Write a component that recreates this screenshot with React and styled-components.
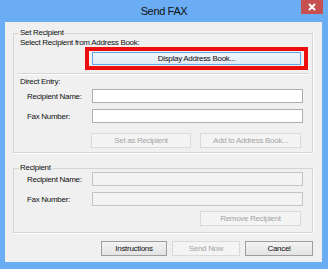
import React from 'react';
import styled, { createGlobalStyle } from 'styled-components';

const Global = createGlobalStyle`
  html, body { margin: 0; padding: 0; }
  body { font-family: "Liberation Sans", Arial, sans-serif; }
  * { box-sizing: border-box; }
`;

const Window = styled.div`
  width: 328px;
  height: 269px;
  background: #6badf4;
  display: flex;
  flex-direction: column;
  padding: 0 6px 7px 5px;
`;

const TitleBar = styled.div`
  position: relative;
  height: 22px;
  margin: 0 -6px 0 -5px;
  display: flex;
  align-items: center;
  justify-content: center;
  font-size: 11px;
  letter-spacing: -0.35px;
  color: #111;
`;

const CloseButton = styled.div`
  position: absolute;
  top: 0;
  right: 5px;
  width: 22px;
  height: 14px;
  background: #c75050;
  display: flex;
  align-items: center;
  justify-content: center;
`;

const Client = styled.div`
  flex: 1;
  background: #f0f0f0;
  padding: 11px 9px 0 8px;
  display: flex;
  flex-direction: column;
  font-size: 8px;
  letter-spacing: -0.3px;
  color: #111;
`;

const Group = styled.div`
  position: relative;
  border: 1px solid #d5d5d5;
  box-shadow: 1px 1px 0 #fdfdfd;
  padding: ${(p) => p.$pad};
  margin-top: ${(p) => p.$mt || 0}px;
  display: flex;
  flex-direction: column;
`;

const Legend = styled.span`
  position: absolute;
  top: -6px;
  left: 5px;
  padding: 0 1px;
  background: #f0f0f0;
  line-height: 10px;
`;

const Caption = styled.div`
  line-height: ${(p) => p.$lh}px;
  height: ${(p) => p.$lh}px;
  margin-top: ${(p) => p.$mt || 0}px;
`;

const Highlight = styled.div`
  margin-left: 65px;
  border: 4px solid #ee0d0d;
  padding: 1px 3px;
  display: flex;
`;

const Separator = styled.div`
  margin: 3px -1px 0 -3px;
  height: 2px;
  border-top: 1px solid #d5d5d5;
  border-bottom: 1px solid #fdfdfd;
`;

const FieldRow = styled.div`
  display: flex;
  align-items: center;
  padding-left: 7px;
  margin-top: ${(p) => p.$mt}px;
`;

const FieldLabel = styled.span`
  width: 65px;
`;

const TextBox = styled.input`
  width: 211px;
  height: 14px;
  margin: 0;
  padding: 0 2px;
  border: 1px solid ${(p) => (p.disabled ? '#c4c4c4' : '#abadb3')};
  background: ${(p) => (p.disabled ? '#f3f3f3' : '#ffffff')};
  outline: none;
  font: inherit;
`;

const ButtonRow = styled.div`
  display: flex;
  justify-content: flex-end;
  gap: ${(p) => p.$gap}px;
  margin-top: ${(p) => p.$mt}px;
  padding-right: ${(p) => p.$pr || 0}px;
`;

const Button = styled.button`
  width: ${(p) => (p.$width ? `${p.$width}px` : 'auto')};
  flex: ${(p) => (p.$width ? 'none' : '1')};
  height: ${(p) => p.$h || 15}px;
  margin: 0;
  padding: 0;
  font-family: "Liberation Sans", Arial, sans-serif;
  font-size: 8px;
  letter-spacing: -0.3px;
  line-height: 1;
  color: ${(p) => (p.disabled ? '#a4a4a4' : '#111')};
  border: 1px solid
    ${(p) =>
      p.disabled ? '#dadada' : p.$accent ? '#5fa4e8' : '#9e9e9e'};
  background: ${(p) =>
    p.disabled
      ? '#f4f4f4'
      : p.$accent
      ? 'linear-gradient(#eef4fb, #e2ebf4)'
      : 'linear-gradient(#f3f3f3, #e3e3e3)'};
  border-radius: 0;
`;

export default function App() {
  return (
    <>
      <Global />
      <Window>
        <TitleBar>
          Send FAX
          <CloseButton>
            <svg width="8" height="8" viewBox="0 0 8 8">
              <path d="M1 1 L7 7 M7 1 L1 7" stroke="#fff" strokeWidth="2" />
            </svg>
          </CloseButton>
        </TitleBar>
        <Client>
          <Group $pad="4px 4px 4px 6px">
            <Legend>Set Recipient</Legend>
            <Caption $lh={9}>Select Recipient from Address Book:</Caption>
            <Highlight>
              <Button $accent $h={13}>Display Address Book...</Button>
            </Highlight>
            <Separator />
            <Caption $lh={10} $mt={2}>Direct Entry:</Caption>
            <FieldRow $mt={2}>
              <FieldLabel>Recipient Name:</FieldLabel>
              <TextBox />
            </FieldRow>
            <FieldRow $mt={6}>
              <FieldLabel>Fax Number:</FieldLabel>
              <TextBox />
            </FieldRow>
            <ButtonRow $gap={9} $mt={10} $pr={7}>
              <Button disabled $width={100}>Set as Recipient</Button>
              <Button disabled $width={101}>Add to Address Book...</Button>
            </ButtonRow>
          </Group>
          <Group $pad="3px 4px 6px 6px" $mt={15}>
            <Legend>Recipient</Legend>
            <FieldRow $mt={0}>
              <FieldLabel>Recipient Name:</FieldLabel>
              <TextBox disabled />
            </FieldRow>
            <FieldRow $mt={6}>
              <FieldLabel>Fax Number:</FieldLabel>
              <TextBox disabled />
            </FieldRow>
            <ButtonRow $gap={9} $mt={5} $pr={7}>
              <Button disabled $width={101}>Remove Recipient</Button>
            </ButtonRow>
          </Group>
          <ButtonRow $gap={5} $mt={8}>
            <Button $width={66} $h={15}>Instructions</Button>
            <Button disabled $width={68} $h={15}>Send Now</Button>
            <Button $width={68} $h={15}>Cancel</Button>
          </ButtonRow>
        </Client>
      </Window>
    </>
  );
}
